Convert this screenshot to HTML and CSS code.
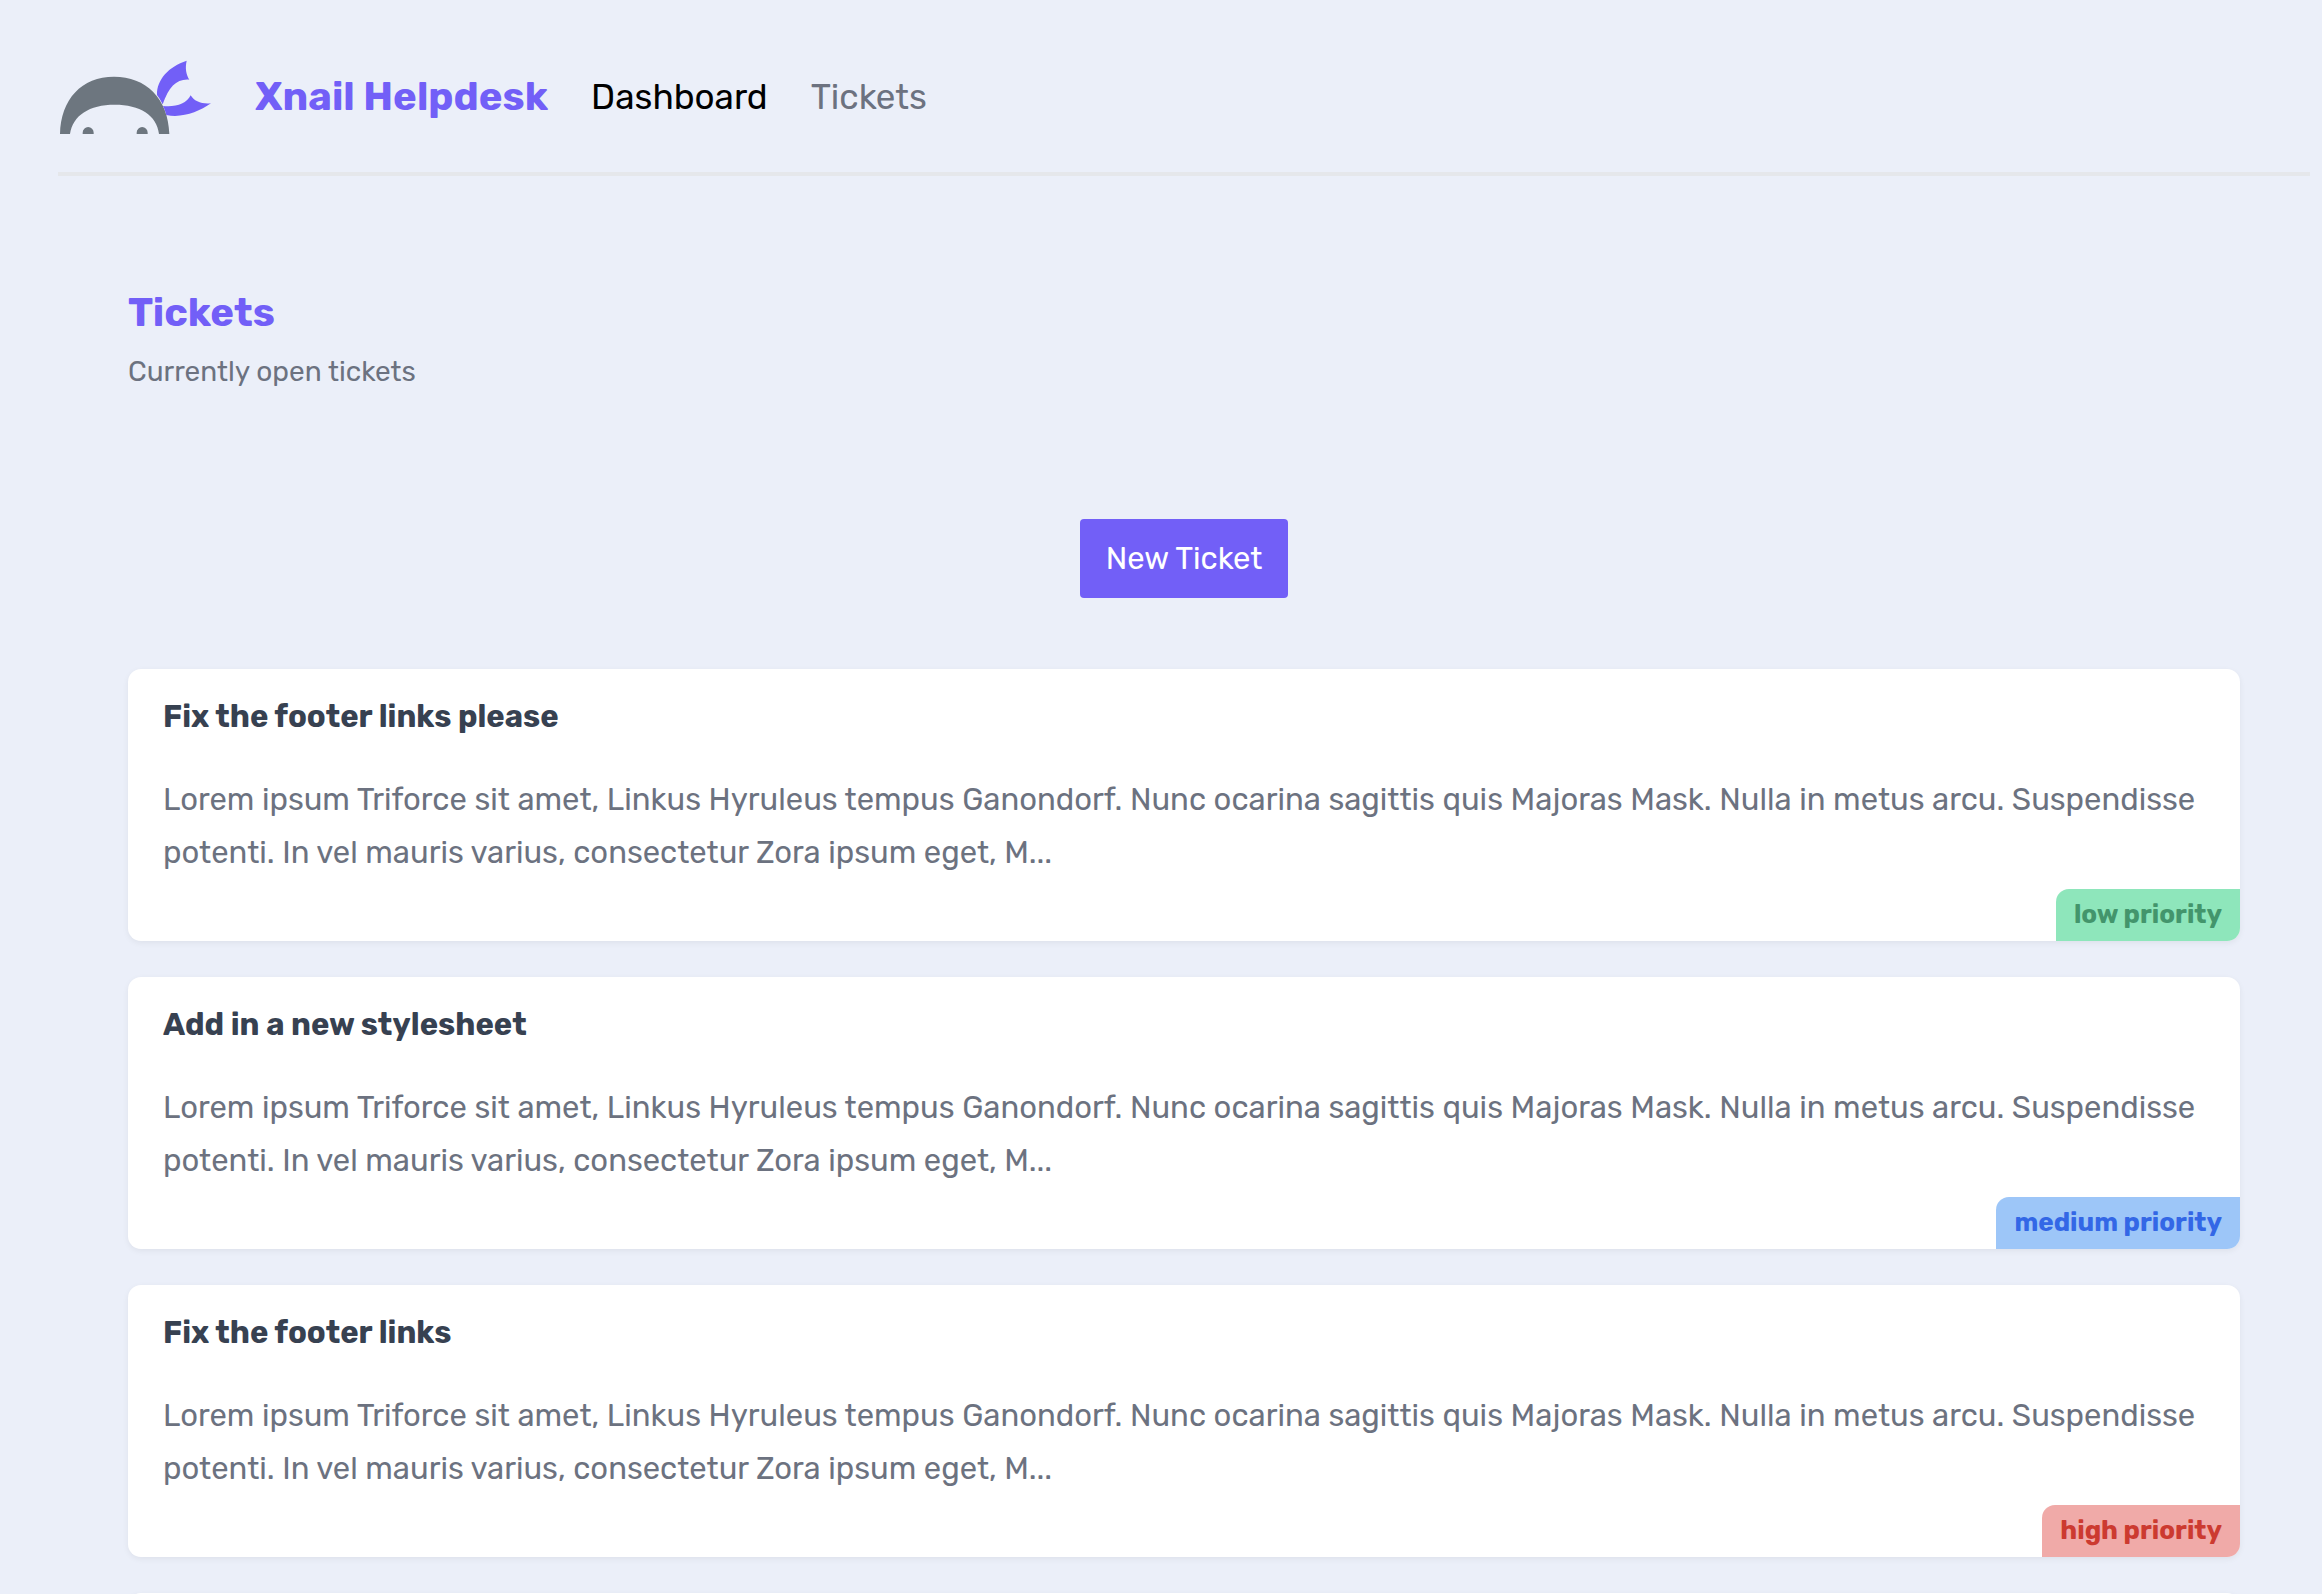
FILE: index.html
```html
<!DOCTYPE html>
<html lang="en">
<head>
<meta charset="utf-8">
<meta name="viewport" content="width=device-width, initial-scale=1">
<title>Xnail Helpdesk</title>
<link rel="stylesheet" href="styles.css">
</head>
<body>
<header class="site-header">
  <svg class="logo" viewBox="54 60 459 225" aria-hidden="true">
    <path fill="#6d767f" d="M60 282C62 178 125 110 222 110C318 110 385 175 388 282H357C350 225 300 194 224 194C148 194 98 226 90 282Z"/>
    <path fill="#6d767f" d="M128 282V278A16.500 17 0 0 1 161 278V282ZM290 282V278A16.500 17 0 0 1 323 278V282Z"/>
    <path fill="#725ff7" d="M351 165C350 118 386 80 440 62C435 84 438 103 448 119C410 116 387 140 368 193Q360 176 351 165Z"/>
    <path fill="#725ff7" d="M369 198C406 202 440 192 452 166C462 184 486 193 513 190C476 216 426 235 379 225Q376 211 369 198Z"/>
  </svg>
  <nav class="nav">
    <h1 class="heading">Xnail Helpdesk</h1>
    <a class="nav-link active" href="#">Dashboard</a>
    <a class="nav-link" href="#tickets">Tickets</a>
  </nav>
</header>
<main class="content" id="tickets">
  <h2 class="heading">Tickets</h2>
  <p class="intro">Currently open tickets</p>
  <div class="actions"><button class="new-ticket" type="button">New Ticket</button></div>
  <div class="tickets">
    <article class="ticket">
      <h3 class="ticket-title">Fix the footer links please</h3>
      <p class="ticket-text">Lorem ipsum Triforce sit amet, Linkus Hyruleus tempus Ganondorf. Nunc ocarina sagittis quis Majoras Mask. Nulla in metus arcu. Suspendisse potenti. In vel mauris varius, consectetur Zora ipsum eget, M...</p>
      <span class="priority low">low priority</span>
    </article>
    <article class="ticket">
      <h3 class="ticket-title">Add in a new stylesheet</h3>
      <p class="ticket-text">Lorem ipsum Triforce sit amet, Linkus Hyruleus tempus Ganondorf. Nunc ocarina sagittis quis Majoras Mask. Nulla in metus arcu. Suspendisse potenti. In vel mauris varius, consectetur Zora ipsum eget, M...</p>
      <span class="priority medium">medium priority</span>
    </article>
    <article class="ticket">
      <h3 class="ticket-title">Fix the footer links</h3>
      <p class="ticket-text">Lorem ipsum Triforce sit amet, Linkus Hyruleus tempus Ganondorf. Nunc ocarina sagittis quis Majoras Mask. Nulla in metus arcu. Suspendisse potenti. In vel mauris varius, consectetur Zora ipsum eget, M...</p>
      <span class="priority high">high priority</span>
    </article>
    <article class="ticket"></article>
  </div>
</main>
</body>
</html>
```

FILE: styles.css
```css
* { box-sizing: border-box; }
body {
  margin: 0;
  padding: 0 12px 0 58px;
  height: 100vh;
  overflow: hidden;
  background: #ebeff9;
  color: #6c7280;
  font-family: Rubik, Roboto, sans-serif;
}
h1, h2, h3, p { margin: 0; }
.site-header {
  display: flex;
  align-items: center;
  gap: 44px;
  padding: 60px 0 37px;
  border-bottom: 4px solid #e5e7eb;
}
.logo { width: 153px; height: 75px; overflow: visible; }
.nav { display: flex; align-items: center; gap: 43px; padding-bottom: 2px; }
.heading {
  font-size: 40px;
  line-height: 56px;
  font-weight: 700;
  color: #725ff7;
}
.nav-link {
  font-size: 35px;
  line-height: 56px;
  color: #6c7280;
  text-decoration: none;
}
.nav-link.active { color: #000; }
.content { padding: 109px 70px 36px; }
.intro {
  margin-top: 9px;
  font-size: 28px;
  line-height: 44px;
}
.actions {
  display: flex;
  justify-content: center;
  padding: 125px 0 71px;
}
.new-ticket {
  padding: 15px 26px;
  border: 0;
  border-radius: 4px;
  background: #725ff7;
  color: #fff;
  font: 400 31px/49px Rubik, Roboto, sans-serif;
}
.tickets { display: grid; gap: 36px; }
.ticket {
  position: relative;
  min-height: 272px;
  padding: 24px 35px 62px;
  border-radius: 13px;
  background: #fff;
  box-shadow: 0 2px 6px rgba(0, 0, 0, .06);
}
.ticket-title {
  font-size: 31px;
  line-height: 48px;
  font-weight: 700;
  color: #374151;
}
.ticket-text {
  margin-top: 32px;
  font-size: 31px;
  line-height: 53px;
}
.priority {
  position: absolute;
  right: 0;
  bottom: 0;
  padding: 0 18px;
  border-radius: 13px 0;
  font-size: 26px;
  line-height: 52px;
  font-weight: 700;
}
.low { background: #8ee6bb; color: #43956c; }
.medium { background: #9dc6f8; color: #3367e6; }
.high { background: #f0aaa8; color: #cc3a30; }
```
